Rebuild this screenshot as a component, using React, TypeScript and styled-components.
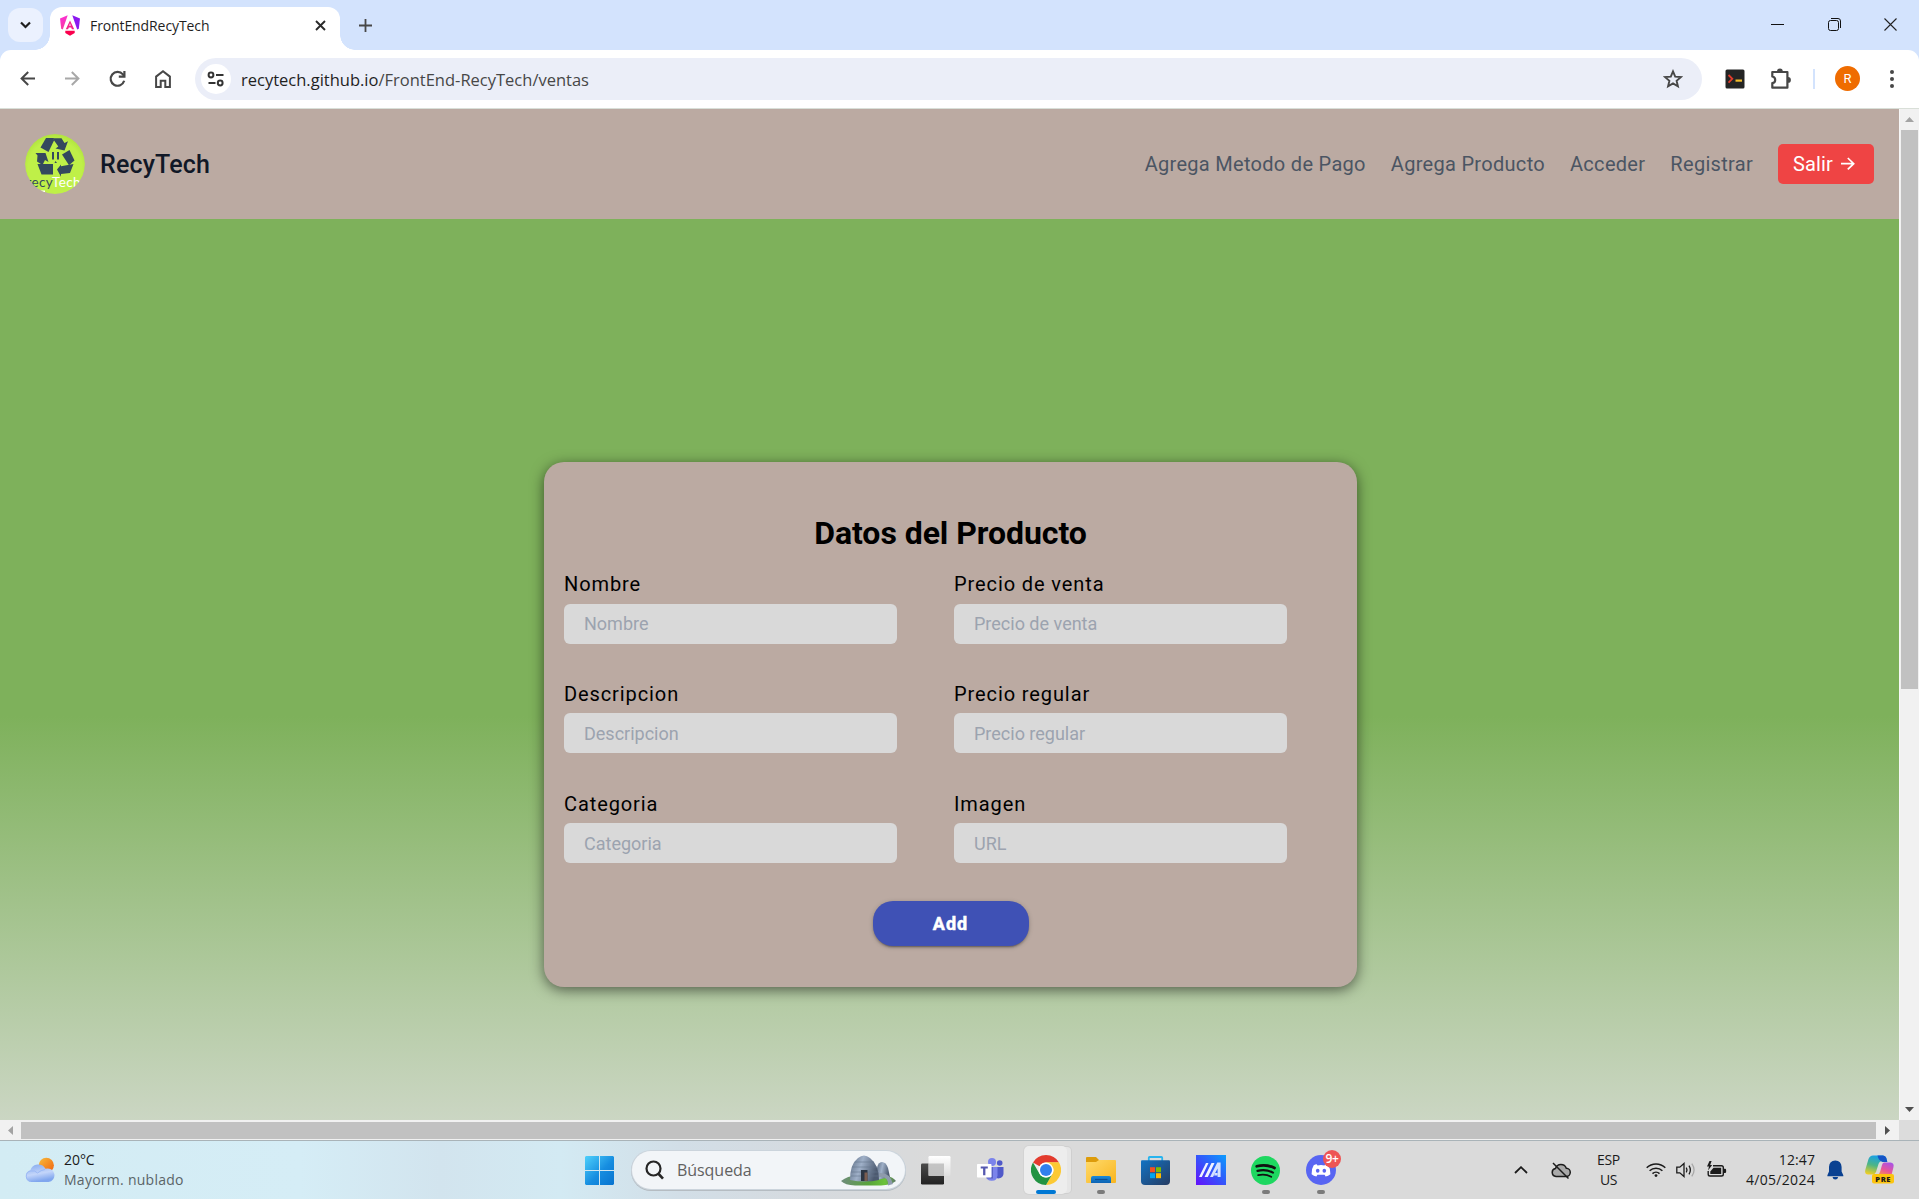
import React from "react";
import styled, { createGlobalStyle } from "styled-components";

const GlobalStyle = createGlobalStyle`
  * { box-sizing: border-box; }
  html, body { margin: 0; padding: 0; overflow: hidden; }
  svg { display: block; flex: none; }
`;

const uiFont = `"Open Sans", "Noto Sans", sans-serif`;

const Screen = styled.div`
  width: 1919px;
  height: 1199px;
  display: flex;
  flex-direction: column;
  overflow: hidden;
  background: #fff;
  font-family: Roboto, sans-serif;
`;

/* ---------- Browser chrome ---------- */

const TabStrip = styled.div`
  height: 50px;
  flex: none;
  display: flex;
  padding-left: 8px;
  background: #d3e3fd;
`;

const TabSearch = styled.div`
  width: 35px;
  height: 34px;
  margin-top: 8px;
  display: grid;
  place-items: center;
  border-radius: 12px;
  background: #ebf1fe;
`;

const Tab = styled.div`
  position: relative;
  width: 290px;
  height: 43px;
  margin: 7px 0 0 7px;
  padding: 0 14px 6px 10px;
  display: flex;
  align-items: center;
  border-radius: 12px 12px 0 0;
  background: #fff;
  &::before,
  &::after {
    content: "";
    position: absolute;
    bottom: 0;
    width: 15px;
    height: 15px;
  }
  &::before {
    left: -15px;
    background: radial-gradient(circle at 0 0, transparent 14.5px, #fff 15px);
  }
  &::after {
    right: -15px;
    background: radial-gradient(circle at 100% 0, transparent 14.5px, #fff 15px);
  }
`;

const TabTitle = styled.span`
  flex: 1;
  margin-left: 10px;
  font: 400 14px/20px ${uiFont};
  letter-spacing: -0.1px;
  color: #1f1f1f;
`;

const NewTab = styled.div`
  width: 36px;
  margin: 0 0 0 7px;
  padding-top: 7px;
  height: 43px;
  display: grid;
  place-items: center;
`;

const WindowButtons = styled.div`
  margin-left: auto;
  display: flex;
  height: 49px;
`;

const WindowButton = styled.div<{ $w: number }>`
  width: ${(p) => p.$w}px;
  display: grid;
  place-items: center;
`;

const ToolbarBack = styled.div`
  height: 59px;
  flex: none;
  background: #d3e3fd;
`;

const Toolbar = styled.div`
  height: 59px;
  display: flex;
  align-items: center;
  padding: 0 0 1px 5px;
  border-radius: 11px 11px 0 0;
  border-bottom: 1px solid #d9dfd8;
  background: #fff;
`;

const ToolSlot = styled.div<{ $w?: number }>`
  width: ${(p) => p.$w ?? 45}px;
  height: 42px;
  flex: none;
  display: grid;
  place-items: center;
`;

const MenuSlot = styled(ToolSlot)`
  margin-left: auto;
`;

const Omnibox = styled.div`
  width: 1507px;
  height: 42px;
  flex: none;
  margin-left: 10px;
  padding: 0 19px 0 6px;
  display: flex;
  align-items: center;
  border-radius: 21px;
  background: #ebeef8;
`;

const SiteInfo = styled.div`
  width: 30px;
  height: 30px;
  display: grid;
  place-items: center;
  border-radius: 50%;
  background: #fff;
`;

const Url = styled.div`
  flex: 1;
  margin-left: 10px;
  padding-top: 2px;
  font: 400 16.5px/26px ${uiFont};
  letter-spacing: 0;
  color: #1f1f1f;
  span { color: #474747; }
`;

const ToolDivider = styled.div`
  width: 2px;
  height: 20px;
  background: #d3e3fd;
`;

const Avatar = styled.div`
  width: 25px;
  height: 25px;
  border-radius: 50%;
  background: #ef6c00;
  color: #fff;
  font: 400 13px/25px Roboto, sans-serif;
  text-align: center;
`;

/* ---------- Page ---------- */

const Viewport = styled.div`
  height: 1031px;
  flex: none;
  display: grid;
  grid-template-columns: 1899px 20px;
  grid-template-rows: 1011px 20px;
`;

const Page = styled.div`
  display: flex;
  flex-direction: column;
  align-items: center;
  background: linear-gradient(#7eb15b 0, #7eb15b 607px, #cbd6c3 1011px);
`;

const Header = styled.header`
  width: 100%;
  height: 110px;
  flex: none;
  display: flex;
  align-items: center;
  padding: 0 25px;
  background: #bbaaa2;
`;

const Brand = styled.div`
  flex: 1;
  margin-left: 15px;
  padding-top: 2px;
  font-size: 25px;
  line-height: 36px;
  font-weight: 500;
  letter-spacing: 0.15px;
  color: #111827;
`;

const Nav = styled.nav`
  display: flex;
  align-items: center;
  gap: 25px;
  font-size: 20px;
  line-height: 30px;
  letter-spacing: 0.3px;
  color: #4b5563;
`;

const LogoutButton = styled.div`
  width: 96px;
  height: 40px;
  display: flex;
  align-items: center;
  gap: 8px;
  padding-left: 15px;
  border-radius: 5px;
  background: #ef4444;
  color: #fff;
  letter-spacing: 0.15px;
`;

const Card = styled.form`
  width: 813px;
  height: 525px;
  margin: 243px 0 0 2px;
  padding: 46px 20px 0;
  display: flex;
  flex-direction: column;
  align-items: center;
  border-radius: 20px;
  background: #bbaaa2;
  box-shadow: 0 3px 14px rgba(0, 0, 0, 0.55);
`;

const Title = styled.h1`
  margin: 0 0 10.6px;
  font-size: 32px;
  line-height: 50px;
  font-weight: 700;
  letter-spacing: -0.05px;
  color: #000;
`;

const Fields = styled.div`
  width: 100%;
  display: grid;
  grid-template-columns: 333px 333px;
  column-gap: 57px;
  row-gap: 34.8px;
`;

const Field = styled.label`
  display: flex;
  flex-direction: column;
  gap: 4.5px;
  padding-top: 0.5px;
  font-size: 20px;
  line-height: 30px;
  letter-spacing: 0.9px;
  color: #000;
`;

const Input = styled.input`
  width: 333px;
  height: 40px;
  padding: 0 20px;
  border: 0;
  border-radius: 6px;
  background: #d9d9d9;
  font: 400 18px Roboto, sans-serif;
  &::placeholder { color: #9ca3af; opacity: 1; }
`;

const AddButton = styled.button`
  width: 156px;
  height: 45px;
  margin-top: 37.8px;
  padding: 0;
  border: 0;
  border-radius: 20px;
  background: #3f51b5;
  box-shadow: 0 3px 1px -2px rgba(0, 0, 0, 0.2), 0 2px 2px rgba(0, 0, 0, 0.14), 0 1px 5px rgba(0, 0, 0, 0.2);
  color: #fff;
  font: 700 18px/45px Roboto, sans-serif;
  letter-spacing: 1px;
  -webkit-text-stroke: 0.5px #fff;
`;

/* ---------- Scroll bars ---------- */

const VScroll = styled.div`
  display: flex;
  flex-direction: column;
  align-items: center;
  background: #f1f1f1;
  border-left: 1px solid #f7f7f7;
`;

const VThumb = styled.div`
  width: 17px;
  height: 559px;
  background: #c1c1c1;
`;

const HScroll = styled.div`
  display: flex;
  align-items: center;
  background: #f1f1f1;
`;

const HThumb = styled.div`
  width: 1855px;
  height: 17px;
  background: #c1c1c1;
`;

const ArrowBox = styled.div<{ $w: number; $h: number }>`
  width: ${(p) => p.$w}px;
  height: ${(p) => p.$h}px;
  display: grid;
  place-items: center;
`;

const Spacer = styled.div`
  flex: 1;
`;

const Corner = styled.div`
  background: #dcdcdc;
`;

/* ---------- Taskbar ---------- */

const Taskbar = styled.div`
  height: 59px;
  flex: none;
  display: flex;
  border-top: 1px solid #a9b3b8;
  background: linear-gradient(90deg, #d3ecf4 0, #d5edf6 300px, #d2e4ee 440px, #d3eaf3 560px, #d2dee7 680px, #d6dade 820px, #dadada 940px, #dadada 100%);
  font-family: ${uiFont};
`;

const Weather = styled.div`
  width: 572px;
  padding-left: 25px;
  display: flex;
  align-items: center;
  gap: 9px;
`;

const WeatherText = styled.div`
  padding-bottom: 1px;
  font-size: 14px;
  line-height: 20px;
  letter-spacing: -0.05px;
  color: #1b1b1b;
  div + div { color: #5a6468; letter-spacing: 0.26px; }
`;

const TaskSlot = styled.div`
  position: relative;
  width: 55px;
  flex: none;
  display: grid;
  place-items: center;
`;

const ActiveTile = styled.div`
  width: 43px;
  height: 48px;
  display: grid;
  place-items: center;
  border-radius: 5px;
  background: #ededed;
  box-shadow: 5px 0 0 -1px #e6e6e6, 5px 0 0 0 #cfcfcf, 0 0 0 1px #d3d3d3;
`;

const Indicator = styled.div<{ $active?: boolean }>`
  position: absolute;
  left: 50%;
  bottom: 5px;
  width: ${(p) => (p.$active ? 20 : 8)}px;
  height: 4px;
  border-radius: 2px;
  transform: translateX(-50%);
  background: ${(p) => (p.$active ? "#0078d4" : "#7b7b7b")};
`;

const Badge = styled.div`
  position: absolute;
  left: 30px;
  top: 9px;
  width: 18px;
  height: 18px;
  border-radius: 50%;
  background: #ee5555;
  color: #fff;
  font-size: 12px;
  font-weight: 600;
  letter-spacing: -0.3px;
  line-height: 17px;
  text-align: center;
`;

const Search = styled.div`
  width: 273px;
  height: 38px;
  margin: 10px 3px 0 5px;
  padding: 0 9px 0 13px;
  display: flex;
  align-items: center;
  border-radius: 19px;
  background: #f2f5f8;
  box-shadow: 0 0 0 1px #cbd4dc, 0 1px 0 1px #b5bcc2;
`;

const SearchText = styled.div`
  flex: 1;
  margin-left: 13px;
  font-size: 16px;
  line-height: 24px;
  letter-spacing: -0.05px;
  color: #616161;
`;

const Tray = styled.div`
  margin-left: auto;
  display: flex;
  align-items: center;
  font-size: 14px;
  line-height: 20px;
  letter-spacing: -0.35px;
  color: #1b1b1b;
`;

const TraySlot = styled.div<{ $w: number }>`
  width: ${(p) => p.$w}px;
  flex: none;
  display: grid;
  place-items: center;
  text-align: center;
`;

const Clock = styled.div`
  width: 80px;
  padding-bottom: 1px;
  line-height: 20px;
  letter-spacing: 0.1px;
  text-align: right;
  div + div { letter-spacing: 0.3px; }
`;

/* ---------- Drawings ---------- */

type Dir = "up" | "down" | "left" | "right";
const trianglePoints: Record<Dir, string> = {
  up: "0,5 4.5,0 9,5",
  down: "0,0 9,0 4.5,5",
  left: "5,0 0,4.5 5,9",
  right: "0,0 5,4.5 0,9",
};
const Triangle = ({ dir, color }: { dir: Dir; color: string }) => {
  const v = dir === "up" || dir === "down";
  return (
    <svg width={v ? 9 : 5} height={v ? 5 : 9}>
      <polygon points={trianglePoints[dir]} fill={color} />
    </svg>
  );
};

const AngularIcon = () => (
  <svg width="20" height="21" viewBox="0 0 20 21">
    <defs>
      <linearGradient id="ngl" x1="0" y1="0" x2="0.3" y2="1">
        <stop offset="0" stopColor="#fb2ee0" />
        <stop offset="1" stopColor="#f83a9e" />
      </linearGradient>
    </defs>
    <path d="M0 3.5 7.7 0.3 2.8 14.6 1.2 13.8Z" fill="url(#ngl)" />
    <path d="M12.3 0.3 20 3.5 18.8 13.8 17.2 14.6Z" fill="#8b18f0" />
    <path d="M10 5.4 14.2 14.3H11.9L11.2 12.5H8.8L8.1 14.3H5.8ZM10 8.3 9.2 10.8H10.8Z" fill="#f4228a" fillRule="evenodd" />
    <path d="M5.3 15.8H14.7V18L10 20.7 5.3 18Z" fill="#fa004d" />
  </svg>
);

const line = (d: string, w: number, h: number, color = "#474747", sw = 2) => (
  <svg width={w} height={h} viewBox={`0 0 ${w} ${h}`} fill="none" stroke={color} strokeWidth={sw}>
    <path d={d} />
  </svg>
);

const ReloadIcon = () => (
  <svg width="18" height="18" viewBox="0 0 18 18" fill="none" stroke="#474747" strokeWidth="2.2">
    <path d="M15.2 10.8A6.9 6.9 0 1 1 13.9 4.4L15.4 5.9" />
    <path d="M15.4 1V6.6H9.8" />
  </svg>
);

const TuneIcon = () => (
  <svg width="18" height="16" viewBox="0 0 18 16" fill="none" stroke="#333" strokeWidth="2">
    <circle cx="4" cy="4" r="2.4" />
    <path d="M9 4H16.5M1.5 12H8.5" />
    <circle cx="13.2" cy="12" r="2.4" />
  </svg>
);

const StarIcon = () => (
  <svg width="20" height="20" viewBox="0 0 20 20" fill="none" stroke="#474747" strokeWidth="1.9">
    <path d="M10 2.4 12.2 7.6 17.9 8.1 13.6 11.8 14.9 17.3 10 14.4 5.1 17.3 6.4 11.8 2.1 8.1 7.8 7.6Z" />
  </svg>
);

const TerminalIcon = () => (
  <svg width="20" height="20" viewBox="0 0 20 20" fill="none">
    <rect x="0.5" y="0.5" width="19" height="19" rx="1.5" fill="#242424" />
    <path d="M3.5 6 7.3 9.8 3.5 13.6" stroke="#e23c2c" strokeWidth="1.8" />
    <path d="M10.5 11.6H17" stroke="#f2bd2c" strokeWidth="2.2" />
  </svg>
);

const PuzzleIcon = () => (
  <svg width="22" height="22" viewBox="0 0 22 22">
    <path d="M2.3 4H17.4V19.7H2.3V15.2Q5.2 14.6 5.2 11.9 5.2 9.2 2.3 8.5Z" fill="none" stroke="#474747" strokeWidth="2.2" strokeLinejoin="round" />
    <path d="M7 3.5a2.9 2.9 0 0 1 5.8 0ZM18 9a2.9 2.9 0 0 1 0 5.8Z" fill="#474747" />
  </svg>
);

const KebabIcon = () => (
  <svg width="4" height="18" viewBox="0 0 4 18" fill="#474747">
    <circle cx="2" cy="2" r="2" />
    <circle cx="2" cy="9" r="2" />
    <circle cx="2" cy="16" r="2" />
  </svg>
);

const RecyLogo = () => (
  <svg width="60" height="60" viewBox="0 0 60 60">
    <defs>
      <clipPath id="logoClip">
        <circle cx="30" cy="30" r="30" />
      </clipPath>
      <radialGradient id="lime" cx="0.5" cy="0.56" r="0.56">
        <stop offset="0.8" stopColor="#bff048" />
        <stop offset="1" stopColor="#b0e33f" />
      </radialGradient>
    </defs>
    <g clipPath="url(#logoClip)">
      <circle cx="30" cy="30" r="30" fill="url(#lime)" />
      <g fill="#34495e">
        <path d="M21 4H28.5L29 6.5 23.5 18 15.5 13.5Z" />
        <path d="M27.5 4.2H36.5L39.5 9 43 7.3 39.5 16.5 30.5 14.5 33.3 12.6Z" />
        <path d="M37 20.5 44.5 16 49.5 26.5 44 31.2Z" />
        <path d="M10.5 19H20.5L23.5 28 20 26 17.5 31 12 27.5 12.5 21.5Z" />
        <path d="M12.5 30H28V40.5H16.5Z" />
        <path d="M32 35.5 36 30.5V32.3L48.5 30 45 39 36 40V42.8Z" />
        <path d="M27 18H29V25.5H27ZM32 18H34V25.5H32ZM29.5 29 30.5 27 32 29Z" />
      </g>
      <text x="1.5" y="52.7" fontFamily="Lato, sans-serif" fontSize="13.5" textLength="54" fill="#34495e">
        recy<tspan fill="#fff">Tech</tspan>
      </text>
      <path d="M15.5 56.5H20V58H15.5Z" fill="#fff" />
    </g>
  </svg>
);

const WeatherIcon = () => (
  <svg width="30" height="26" viewBox="0 0 30 26">
    <defs>
      <linearGradient id="sun" x1="0" y1="0" x2="1" y2="1">
        <stop offset="0" stopColor="#f8bd3c" />
        <stop offset="1" stopColor="#f0600f" />
      </linearGradient>
      <linearGradient id="cloud" x1="0" y1="0" x2="0.3" y2="1">
        <stop offset="0" stopColor="#84a9ee" />
        <stop offset="0.6" stopColor="#c3d5fa" />
        <stop offset="1" stopColor="#80a6ee" />
      </linearGradient>
    </defs>
    <circle cx="21.3" cy="8.3" r="7.6" fill="url(#sun)" />
    <path d="M6 25A6 6 0 0 1 5.3 13.3 8.3 8.3 0 0 1 20.5 11.8 6.8 6.8 0 1 1 23.5 25Z" fill="url(#cloud)" />
    <path d="M6 24.3A5.2 5.2 0 0 1 5.6 14Q10 13 12.5 16 16 13 20 12.5" fill="none" stroke="#9bb9f5" strokeWidth="1" />
  </svg>
);

const WindowsIcon = () => (
  <svg width="29" height="29" viewBox="0 0 29 29">
    <defs>
      <linearGradient id="win" x1="0" y1="0" x2="1" y2="1">
        <stop offset="0" stopColor="#4fd0fb" />
        <stop offset="0.55" stopColor="#168de0" />
        <stop offset="1" stopColor="#0873cf" />
      </linearGradient>
    </defs>
    <path d="M1 0H14V14H0V1ZM15 0H28L29 1V14H15ZM0 15H14V29H1L0 28ZM15 15H29V28L28 29H15Z" fill="url(#win)" />
  </svg>
);

const SearchIcon = () => (
  <svg width="19" height="20" viewBox="0 0 19 20" fill="none" stroke="#262626" strokeWidth="2.2">
    <circle cx="8.5" cy="8.5" r="7" />
    <path d="M13.2 13.5 18 18.6" strokeWidth="2.6" />
  </svg>
);

const HutIcon = () => (
  <svg width="55" height="31" viewBox="0 0 55 31">
    <defs>
      <linearGradient id="hut" x1="0" y1="0" x2="1" y2="0.3">
        <stop offset="0" stopColor="#5b6b82" />
        <stop offset="0.45" stopColor="#9fb0c8" />
        <stop offset="1" stopColor="#4c5a70" />
      </linearGradient>
      <linearGradient id="grass" x1="0" y1="0" x2="1" y2="0">
        <stop offset="0" stopColor="#6f8b7c" />
        <stop offset="0.5" stopColor="#58a43b" />
        <stop offset="0.8" stopColor="#6cc33a" />
        <stop offset="1" stopColor="#5d7568" />
      </linearGradient>
    </defs>
    <path d="M0 26Q8 20 18 21H46Q52 22 55 26 50 30 40 30.5H14Q4 30 0 26Z" fill="url(#grass)" />
    <path d="M36 25V13Q37 7 41 7T47 13L49 22Z" fill="url(#hut)" />
    <path d="M38 18Q49 17 52 29L47 30.5Q48 21 38 22Z" fill="#8e9bac" />
    <path d="M9 25Q9 9 17 3 23-2 29 3 38 10 38 25Q24 28 9 25Z" fill="url(#hut)" />
    <path d="M14 7H33M11 12H36M10 17H37M10 21H37" stroke="#66768d" strokeWidth="0.8" opacity="0.7" />
    <path d="M20 15H26.5V26H20Z" fill="#2c3544" />
    <path d="M23.5 17.5H26.5V26H23.5Z" fill="#7a5c50" />
  </svg>
);

const TaskViewIcon = () => (
  <svg width="30" height="29" viewBox="0 0 30 29">
    <defs>
      <linearGradient id="tv" x1="0" y1="0" x2="0" y2="1">
        <stop offset="0" stopColor="#4b4b4b" />
        <stop offset="1" stopColor="#222" />
      </linearGradient>
      <linearGradient id="tv2" x1="0" y1="0" x2="0" y2="1">
        <stop offset="0" stopColor="#fff" />
        <stop offset="1" stopColor="#dedede" />
      </linearGradient>
    </defs>
    <rect x="0" y="7.5" width="23" height="21" rx="1.2" fill="url(#tv)" />
    <rect x="7.5" y="0" width="22" height="20" rx="1.2" fill="url(#tv2)" />
    <path d="M7.5 7.5H23V20H7.5Z" fill="#b5b5b5" opacity="0.75" />
  </svg>
);

const TeamsIcon = () => (
  <svg width="27" height="25" viewBox="0 0 27 25">
    <circle cx="15" cy="4" r="4" fill="#7b83eb" />
    <circle cx="22.7" cy="5" r="2.8" fill="#5059c9" />
    <path d="M18 9H26.5V15.5A5 5 0 0 1 18 19Z" fill="#5059c9" />
    <path d="M9 9H20.5V17.5A5.8 5.8 0 0 1 9 18Z" fill="#7b83eb" />
    <path d="M14.5 9H16V20.5H9.5V19H14.5Z" fill="#5a62c3" />
    <rect x="0" y="6" width="14.5" height="13.5" rx="0.7" fill="#fff" />
    <path d="M3.7 8.5H10.8V10.6H8.4V17.3H6.1V10.6H3.7Z" fill="#5558af" />
  </svg>
);

const ChromeIcon = () => (
  <svg width="30" height="30" viewBox="0 0 48 48">
    <path d="M24 0A24 24 0 0 1 44.8 12H24A12 12 0 0 0 13.6 18L3.2 12A24 24 0 0 1 24 0Z" fill="#e33b2e" />
    <path d="M44.8 12A24 24 0 0 1 24 48L34.4 30A12 12 0 0 0 34.4 18V12Z" fill="#fcc934" />
    <path d="M34.4 12V18L24 12Z" fill="#fcc934" />
    <path d="M3.2 12A24 24 0 0 0 24 48L34.4 30A12 12 0 0 1 13.6 30Z" fill="#229342" />
    <path d="M24 12H44.8L34.4 20Z" fill="#fcc934" />
    <circle cx="24" cy="24" r="12" fill="#fff" />
    <circle cx="24" cy="24" r="9.6" fill="#3180ee" />
  </svg>
);

const FolderIcon = () => (
  <svg width="30" height="26" viewBox="0 0 30 26">
    <defs>
      <linearGradient id="fold" x1="0" y1="0" x2="1" y2="1">
        <stop offset="0" stopColor="#ffda6b" />
        <stop offset="1" stopColor="#f8b51f" />
      </linearGradient>
      <linearGradient id="tray" x1="0" y1="0" x2="0" y2="1">
        <stop offset="0" stopColor="#1a8ad8" />
        <stop offset="1" stopColor="#0d63b3" />
      </linearGradient>
    </defs>
    <path d="M0 1Q0 0 1 0H10L13 3V8H0Z" fill="#dd9c0b" />
    <path d="M0 5H10L13 3H29Q30 3 30 4V25Q30 26 29 26H1Q0 26 0 25Z" fill="url(#fold)" />
    <path d="M5 26V21Q5 19 7 19H23Q25 19 25 21V26Z" fill="url(#tray)" />
    <path d="M9 22.5H21.5" stroke="#0a4f94" strokeWidth="1.2" />
  </svg>
);

const StoreIcon = () => (
  <svg width="29" height="29" viewBox="0 0 29 29">
    <defs>
      <linearGradient id="store" x1="0" y1="0" x2="1" y2="1">
        <stop offset="0" stopColor="#1273c4" />
        <stop offset="1" stopColor="#263c62" />
      </linearGradient>
    </defs>
    <path d="M7.8 6V1.8Q7.8 1 8.6 1H20.4Q21.2 1 21.2 1.8V6" fill="none" stroke="#28b4ee" strokeWidth="1.8" />
    <path d="M0 5.5Q0 4.3 1 4.3H28Q29 4.3 29 5.5V25Q29 29 25 29H4Q0 29 0 25Z" fill="url(#store)" />
    <path d="M9 11.2H14V16.2H9Z" fill="#f25022" />
    <path d="M15 11.2H20V16.2H15Z" fill="#7fba00" />
    <path d="M9 17.2H14V22.2H9Z" fill="#00a4ef" />
    <path d="M15 17.2H20V22.2H15Z" fill="#ffb900" />
  </svg>
);

const ArmouryIcon = () => (
  <svg width="30" height="30" viewBox="0 0 30 30">
    <defs>
      <linearGradient id="arm" x1="0" y1="1" x2="1" y2="0">
        <stop offset="0" stopColor="#6510fb" />
        <stop offset="0.6" stopColor="#2b63fb" />
        <stop offset="1" stopColor="#0b9dfd" />
      </linearGradient>
    </defs>
    <path d="M0 0H30V30H0Z" fill="url(#arm)" />
    <path d="M3 22 10 8H12.5L5.8 22ZM8.5 22 15.5 8H18.5L11.8 22Z" fill="#f1f3ff" />
    <path d="M14 22 21.3 7.5H24.6V22H21.6V13.5L17 22Z" fill="#d5e1ff" />
    <path d="M19 18H21.6V20.4H18Z" fill="#d5e1ff" />
  </svg>
);

const SpotifyIcon = () => (
  <svg width="29" height="29" viewBox="0 0 29 29" fill="none" stroke="#111" strokeLinecap="round">
    <circle cx="14.5" cy="14.5" r="14.5" fill="#1ed760" stroke="none" />
    <path d="M5.7 10.3Q15 7.6 23.6 12" strokeWidth="2.7" />
    <path d="M6.5 14.9Q14.6 12.7 22 16.6" strokeWidth="2.2" />
    <path d="M7.2 19.2Q14.3 17.5 20.2 20.8" strokeWidth="1.8" />
  </svg>
);

const DiscordIcon = () => (
  <svg width="30" height="30" viewBox="0 0 30 30">
    <circle cx="15" cy="15" r="15" fill="#5865f2" />
    <path d="M19.2 9.2Q21 9.5 22.3 10.2 24.8 14 24.4 19.3 22.2 21 19.6 21.5L18.6 19.8H11.4L10.4 21.5Q7.8 21 5.6 19.3 5.2 14 7.7 10.2 9.2 9.4 10.8 9.2L11.5 10.4Q15 9.8 18.5 10.4Z" fill="#fff" />
    <ellipse cx="11.7" cy="15.7" rx="1.8" ry="2" fill="#5865f2" />
    <ellipse cx="18.3" cy="15.7" rx="1.8" ry="2" fill="#5865f2" />
  </svg>
);

const CloudOffIcon = () => (
  <svg width="20" height="17" viewBox="0 0 20 17" fill="none" stroke="#1b1b1b" strokeWidth="1.5">
    <path d="M5 14.5A4.1 4.1 0 0 1 4.5 6.4 5.7 5.7 0 0 1 15.3 6.3 4.1 4.1 0 0 1 15 14.5Z" fill="#a9a9a9" />
    <path d="M2 1 17.5 16.5" />
  </svg>
);

const WifiIcon = () => (
  <svg width="20" height="16" viewBox="0 0 20 16" fill="none" stroke="#1b1b1b" strokeWidth="1.5">
    <path d="M0.7 5.8A13.4 13.4 0 0 1 19.3 5.8M3.6 8.8A9.2 9.2 0 0 1 16.4 8.8M6.5 11.6A5 5 0 0 1 13.5 11.6" />
    <circle cx="10" cy="13.6" r="1.4" fill="#1b1b1b" stroke="none" />
  </svg>
);

const VolumeIcon = () => (
  <svg width="20" height="16" viewBox="0 0 20 16" fill="none" stroke="#1b1b1b" strokeWidth="1.3">
    <path d="M0.8 5.2H3.8L8 1.5V14.5L3.8 10.8H0.8Z" />
    <path d="M10.3 5.6Q11.7 8 10.3 10.4M13 3.6Q15.7 8 13 12.4" />
    <path d="M15.8 1.6Q20.3 8 15.8 14.4" stroke="#a8a8a8" />
  </svg>
);

const BatteryIcon = () => (
  <svg width="21" height="18" viewBox="0 0 21 18">
    <path d="M7 4.8H15.5Q17.3 4.8 17.3 6.6V13.2Q17.3 15 15.5 15H4Q2.2 15 2.2 13.2V10" fill="none" stroke="#1b1b1b" strokeWidth="1.4" />
    <path d="M7.5 6.8H15.2V13H4.3V10.5Z" fill="#1b1b1b" />
    <path d="M18 7.8H19.3Q20.2 7.8 20.2 9.9T19.3 12H18Z" fill="#1b1b1b" />
    <path d="M3.5 0 1 5.4H3L2 9.5 6.2 4H4.2L5.6 0Z" fill="#1b1b1b" />
  </svg>
);

const BellIcon = () => (
  <svg width="17" height="20" viewBox="0 0 17 20" fill="#0a4191">
    <path d="M8.3 0.5Q14.3 0.8 14.6 7V11.5L16.3 15.3V16.2H0.4V15.3L2 11.5V7Q2.3 0.8 8.3 0.5Z" />
    <path d="M5.5 17H11.2Q10.6 19.6 8.3 19.6T5.5 17Z" />
  </svg>
);

const CopilotIcon = () => (
  <svg width="30" height="30" viewBox="0 0 30 30">
    <defs>
      <linearGradient id="cpl" x1="0.5" y1="0" x2="0.2" y2="1">
        <stop offset="0" stopColor="#16a0ea" />
        <stop offset="0.5" stopColor="#4cb586" />
        <stop offset="1" stopColor="#f3cf22" />
      </linearGradient>
      <linearGradient id="cpr" x1="0.8" y1="0" x2="0.3" y2="1">
        <stop offset="0" stopColor="#a753e8" />
        <stop offset="0.6" stopColor="#e7559c" />
        <stop offset="1" stopColor="#f58a5e" />
      </linearGradient>
    </defs>
    <path d="M8 0.5H18Q20.5 0.5 21.3 3L22 6H17.5Q14.5 6 13.5 9L11 17Q10 19.5 7 19.5H3Q-0.8 19.5 0.4 14.5L3.5 4Q4.8 0.5 8 0.5Z" fill="url(#cpl)" />
    <path d="M12.5 0.5H18Q20.5 0.5 21.3 3L22.4 7H17.5Q13.5 5.5 12.5 0.5Z" fill="#1554c6" />
    <path d="M19 7.5H25.5Q29.6 8 28.4 12.5L26.5 20H12.5Q14.5 19 15.2 16.5L17 10Q17.6 7.8 19 7.5Z" fill="url(#cpr)" />
    <rect x="7" y="19" width="22" height="9.5" rx="2" fill="#fcc40e" />
    <text x="18.2" y="26.6" textAnchor="middle" fontFamily="Open Sans, sans-serif" fontSize="7.6" fontWeight="800" letterSpacing="0.6" fill="#1b1b1b">
      PRE
    </text>
  </svg>
);

/* ---------- Data ---------- */

const fields = [
  { label: "Nombre", placeholder: "Nombre" },
  { label: "Precio de venta", placeholder: "Precio de venta" },
  { label: "Descripcion", placeholder: "Descripcion" },
  { label: "Precio regular", placeholder: "Precio regular" },
  { label: "Categoria", placeholder: "Categoria" },
  { label: "Imagen", placeholder: "URL" },
];

const links = ["Agrega Metodo de Pago", "Agrega Producto", "Acceder", "Registrar"];

export default function App() {
  return (
    <Screen>
      <GlobalStyle />
      <TabStrip>
        <TabSearch>{line("M1 1.5 5.5 6 10 1.5", 11, 8, "#1f1f1f", 2.2)}</TabSearch>
        <Tab>
          <AngularIcon />
          <TabTitle>FrontEndRecyTech</TabTitle>
          {line("M1 1 10 10M10 1 1 10", 11, 11, "#2a2a2a", 1.9)}
        </Tab>
        <NewTab>{line("M6.5 0V13M0 6.5H13", 13, 13, "#474747", 1.8)}</NewTab>
        <WindowButtons>
          <WindowButton $w={57}>{line("M0 .5H13", 13, 1, "#111", 1)}</WindowButton>
          <WindowButton $w={56}>
            {line("M2.5 2.5H8.5Q10.5 2.5 10.5 4.5V10.5Q10.5 12.5 8.5 12.5H2.5Q.5 12.5 .5 10.5V4.5Q.5 2.5 2.5 2.5ZM3 .5H10Q12.5 .5 12.5 3V10", 13, 13, "#111", 1)}
          </WindowButton>
          <WindowButton $w={57}>{line("M.5 .5 12.5 12.5M12.5 .5 .5 12.5", 13, 13, "#222", 1.1)}</WindowButton>
        </WindowButtons>
      </TabStrip>

      <ToolbarBack>
        <Toolbar>
          <ToolSlot>{line("M15 7.5H1.8M8.2 1 1.6 7.5 8.2 14", 15, 15)}</ToolSlot>
          <ToolSlot>{line("M0 7.5H13.2M6.8 1 13.4 7.5 6.8 14", 15, 15, "#a8a8a8")}</ToolSlot>
          <ToolSlot><ReloadIcon /></ToolSlot>
          <ToolSlot>{line("M1.1 16.9V6.6L8 1.3 14.9 6.6V16.9H10.3V10.8H5.7V16.9Z", 16, 18)}</ToolSlot>
          <Omnibox>
            <SiteInfo><TuneIcon /></SiteInfo>
            <Url>recytech.github.io<span>/FrontEnd-RecyTech/ventas</span></Url>
            <StarIcon />
          </Omnibox>
          <ToolSlot $w={66}><TerminalIcon /></ToolSlot>
          <ToolSlot $w={26}><PuzzleIcon /></ToolSlot>
          <ToolSlot $w={40}><ToolDivider /></ToolSlot>
          <ToolSlot $w={27}><Avatar>R</Avatar></ToolSlot>
          <MenuSlot $w={54}><KebabIcon /></MenuSlot>
        </Toolbar>
      </ToolbarBack>

      <Viewport>
        <Page>
          <Header>
            <RecyLogo />
            <Brand>RecyTech</Brand>
            <Nav>
              {links.map((l) => <span key={l}>{l}</span>)}
              <LogoutButton>
                Salir
                {line("M0 6.7H12.5M6.8 1 12.7 6.7 6.8 12.4", 14, 14, "#fff", 1.7)}
              </LogoutButton>
            </Nav>
          </Header>
          <Card>
            <Title>Datos del Producto</Title>
            <Fields>
              {fields.map((f) => (
                <Field key={f.label}>
                  {f.label}
                  <Input placeholder={f.placeholder} />
                </Field>
              ))}
            </Fields>
            <AddButton type="button">Add</AddButton>
          </Card>
        </Page>
        <VScroll>
          <ArrowBox $w={17} $h={21}><Triangle dir="up" color="#a3a3a3" /></ArrowBox>
          <VThumb />
          <Spacer />
          <ArrowBox $w={17} $h={21}><Triangle dir="down" color="#505050" /></ArrowBox>
        </VScroll>
        <HScroll>
          <ArrowBox $w={21} $h={20}><Triangle dir="left" color="#a3a3a3" /></ArrowBox>
          <HThumb />
          <ArrowBox $w={23} $h={20}><Triangle dir="right" color="#505050" /></ArrowBox>
        </HScroll>
        <Corner />
      </Viewport>

      <Taskbar>
        <Weather>
          <WeatherIcon />
          <WeatherText>
            <div>20°C</div>
            <div>Mayorm. nublado</div>
          </WeatherText>
        </Weather>
        <TaskSlot><WindowsIcon /></TaskSlot>
        <Search>
          <SearchIcon />
          <SearchText>Búsqueda</SearchText>
          <HutIcon />
        </Search>
        <TaskSlot><TaskViewIcon /></TaskSlot>
        <TaskSlot><TeamsIcon /></TaskSlot>
        <TaskSlot>
          <ActiveTile><ChromeIcon /></ActiveTile>
          <Indicator $active />
        </TaskSlot>
        <TaskSlot><FolderIcon /><Indicator /></TaskSlot>
        <TaskSlot><StoreIcon /></TaskSlot>
        <TaskSlot><ArmouryIcon /></TaskSlot>
        <TaskSlot><SpotifyIcon /><Indicator /></TaskSlot>
        <TaskSlot><DiscordIcon /><Indicator /><Badge>9+</Badge></TaskSlot>
        <Tray>
          <TraySlot $w={40}>{line("M1 7 7 1.2 13 7", 14, 8, "#1b1b1b", 1.8)}</TraySlot>
          <TraySlot $w={39}><CloudOffIcon /></TraySlot>
          <TraySlot $w={57}><span>ESP<br />US</span></TraySlot>
          <TraySlot $w={38}><WifiIcon /></TraySlot>
          <TraySlot $w={22}><VolumeIcon /></TraySlot>
          <TraySlot $w={38}><BatteryIcon /></TraySlot>
          <Clock>
            <div>12:47</div>
            <div>4/05/2024</div>
          </Clock>
          <TraySlot $w={40}><BellIcon /></TraySlot>
          <TraySlot $w={50}><CopilotIcon /></TraySlot>
          <TraySlot $w={14} />
        </Tray>
      </Taskbar>
    </Screen>
  );
}
